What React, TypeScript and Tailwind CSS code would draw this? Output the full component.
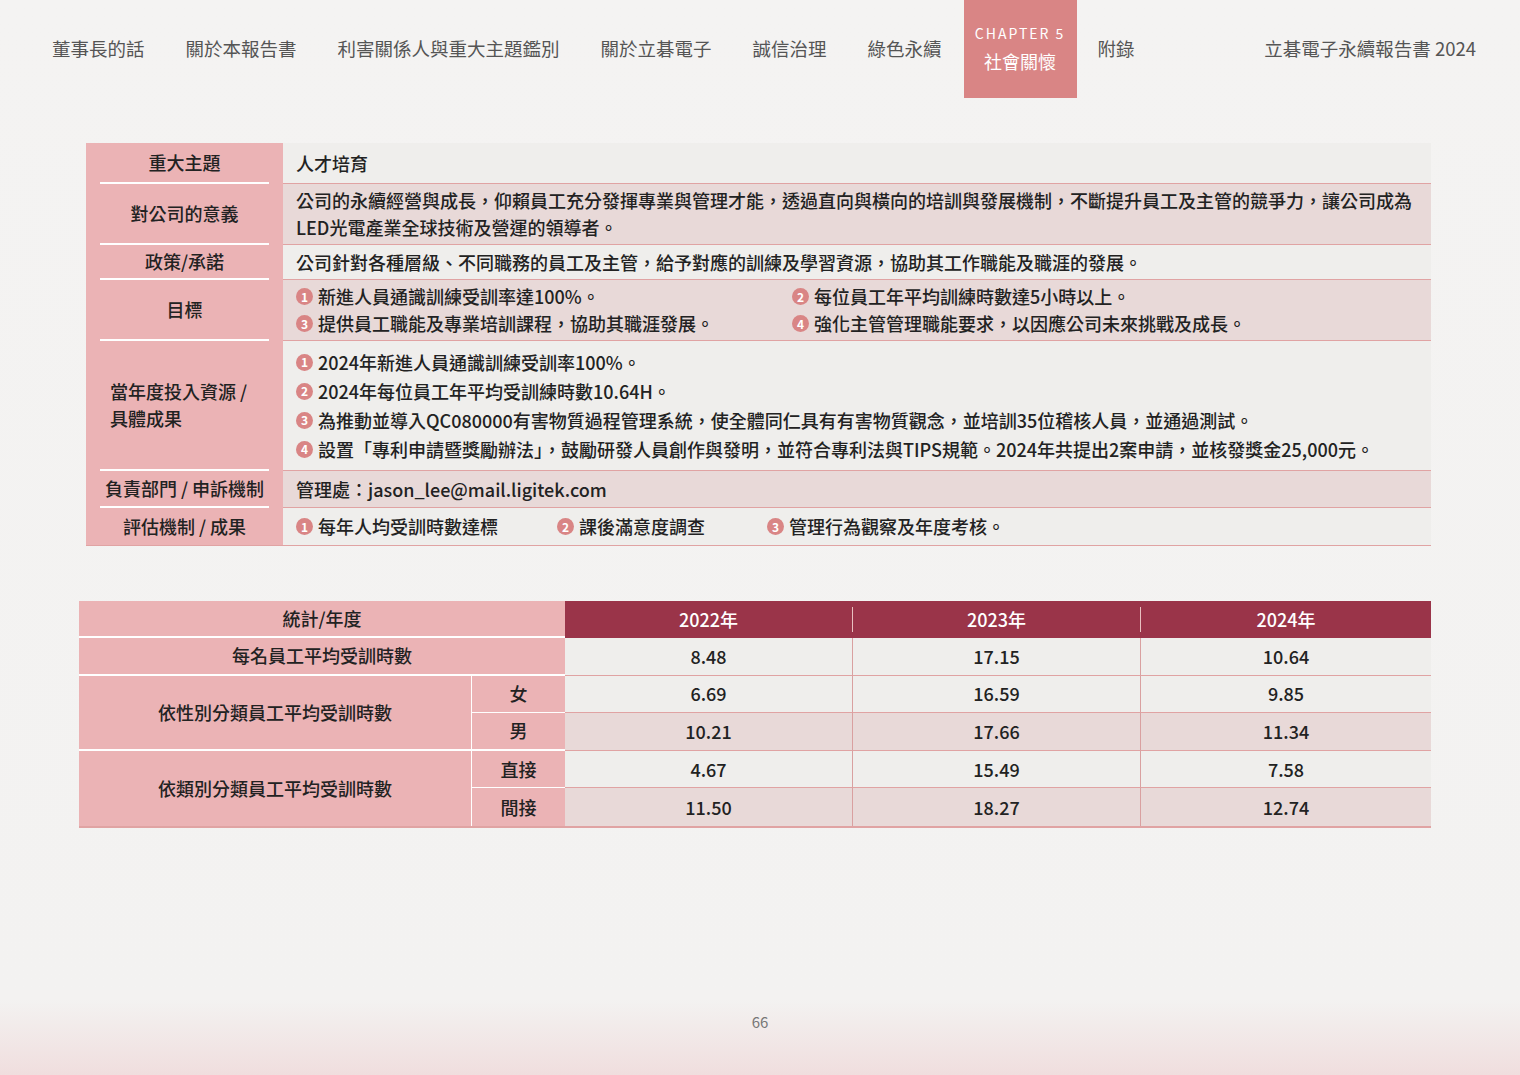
const font = { fontFamily: '"Noto Sans CJK TC", "Noto Sans", sans-serif' }

const nav = ['董事長的話', '關於本報告書', '利害關係人與重大主題鑑別', '關於立碁電子', '誠信治理', '綠色永續']

function Num({ n }: { n: number }) {
  return (
    <span className="mr-[5px] inline-flex h-[17px] w-[17px] shrink-0 items-center justify-center rounded-full bg-[#d98585] text-[12px] font-bold leading-none text-white">
      {n}
    </span>
  )
}

function Label({ children, h, last }: { children: React.ReactNode; h: string; last?: boolean }) {
  return (
    <div className={`${h} flex items-center justify-center bg-[#ebb3b5] px-[14px]`}>
      <div className={`flex h-full w-full items-center justify-center ${last ? '' : 'border-b-2 border-white'}`}>{children}</div>
    </div>
  )
}

const years = [
  ['8.48', '17.15', '10.64'],
  ['6.69', '16.59', '9.85'],
  ['10.21', '17.66', '11.34'],
  ['4.67', '15.49', '7.58'],
  ['11.50', '18.27', '12.74'],
]

export default function App() {
  const light = 'bg-[#efeeec]'
  const dark = 'bg-[#e8d9d8]'
  const cell = 'border-b border-[#e0a3a3] px-[13px] flex items-center'
  return (
    <div style={font} className="relative h-[1075px] w-[1520px] overflow-hidden bg-[linear-gradient(to_bottom,#f4f3f2_0%,#f3f2f1_93%,#f0dede_100%)] text-[18px] font-medium text-[#222]">
      <div className="flex h-[98px] items-start pl-[52px] pr-[44px] text-[18.5px] font-normal text-[#555]">
        <div className="flex h-[98px] items-center gap-[41px]">
          {nav.map((t) => (
            <span key={t}>{t}</span>
          ))}
        </div>
        <div className="ml-[22px] flex h-[98px] w-[113px] flex-col items-center justify-center bg-[#d98585] text-white">
          <span className="text-[14px] tracking-[2px]">CHAPTER 5</span>
          <span className="mt-[4px] text-[18px]">社會關懷</span>
        </div>
        <div className="ml-[21px] flex h-[98px] items-center">附錄</div>
        <div className="ml-auto flex h-[98px] items-center">立碁電子永續報告書 2024</div>
      </div>

      <div className="ml-[86px] mt-[45px] grid w-[1345px] grid-cols-[197px_1fr] leading-[27px]">
        <Label h="h-[41px]">重大主題</Label>
        <div className={`${cell} ${light}`}>人才培育</div>
        <Label h="h-[61px]">對公司的意義</Label>
        <div className={`${cell} ${dark}`}>公司的永續經營與成長，仰賴員工充分發揮專業與管理才能，透過直向與橫向的培訓與發展機制，不斷提升員工及主管的競爭力，讓公司成為LED光電產業全球技術及營運的領導者。</div>
        <Label h="h-[35px]">政策/承諾</Label>
        <div className={`${cell} ${light}`}>公司針對各種層級、不同職務的員工及主管，給予對應的訓練及學習資源，協助其工作職能及職涯的發展。</div>
        <Label h="h-[61px]">目標</Label>
        <div className={`${cell} ${dark} grid grid-cols-[496px_1fr] content-center`}>
          <span className="flex items-center"><Num n={1} />新進人員通識訓練受訓率達100%。</span>
          <span className="flex items-center"><Num n={2} />每位員工年平均訓練時數達5小時以上。</span>
          <span className="flex items-center"><Num n={3} />提供員工職能及專業培訓課程，協助其職涯發展。</span>
          <span className="flex items-center"><Num n={4} />強化主管管理職能要求，以因應公司未來挑戰及成長。</span>
        </div>
        <div className="flex h-[130px] items-center bg-[#ebb3b5] px-[14px]">
          <div className="flex h-full w-full items-center border-b-2 border-white pl-[10px]">當年度投入資源 /<br />具體成果</div>
        </div>
        <div className={`${cell} ${light} flex-col !items-start justify-center leading-[29px]`}>
          <span className="flex items-center"><Num n={1} />2024年新進人員通識訓練受訓率100%。</span>
          <span className="flex items-center"><Num n={2} />2024年每位員工年平均受訓練時數10.64H。</span>
          <span className="flex items-center"><Num n={3} />為推動並導入QC080000有害物質過程管理系統，使全體同仁具有有害物質觀念，並培訓35位稽核人員，並通過測試。</span>
          <span className="flex items-center"><Num n={4} />設置「專利申請暨獎勵辦法」，鼓勵研發人員創作與發明，並符合專利法與TIPS規範。2024年共提出2案申請，並核發獎金25,000元。</span>
        </div>
        <Label h="h-[37px]">負責部門 / 申訴機制</Label>
        <div className={`${cell} ${dark}`}>管理處：jason_lee@mail.ligitek.com</div>
        <div className="flex h-[38px] items-center justify-center border-b border-[#e0a3a3] bg-[#ebb3b5]">評估機制 / 成果</div>
        <div className={`${cell} ${light}`}>
          <span className="flex w-[261px] items-center"><Num n={1} />每年人均受訓時數達標</span>
          <span className="flex w-[210px] items-center"><Num n={2} />課後滿意度調查</span>
          <span className="flex items-center"><Num n={3} />管理行為觀察及年度考核。</span>
        </div>
      </div>

      <div className="ml-[79px] mt-[55px] grid w-[1352px] grid-cols-[393px_93px_288px_288px_290px] grid-rows-[37px_repeat(5,37.6px)] border-b-2 border-[#e0a3a3] text-center">
        <div className="col-span-2 flex items-center justify-center border-b-2 border-white bg-[#ebb3b5]">統計/年度</div>
        {['2022年', '2023年', '2024年'].map((y, i) => (
          <div key={y} className="flex items-center bg-[#9a3449] py-[6px] text-white">
            <div className={`flex h-full w-full items-center justify-center ${i < 2 ? 'border-r border-[#e8c0c0]' : ''}`}>{y}</div>
          </div>
        ))}
        <div className="col-span-2 flex items-center justify-center border-b-2 border-white bg-[#ebb3b5]">每名員工平均受訓時數</div>
        {years[0].map((v, i) => (
          <div key={i} className={`flex items-center justify-center border-b border-[#e0a3a3] ${light} ${i < 2 ? 'border-r border-r-[#d9a0a0]' : ''}`}>{v}</div>
        ))}
        <div className="row-span-2 flex items-center justify-center border-b-2 border-r border-white bg-[#ebb3b5]">依性別分類員工平均受訓時數</div>
        <div className="flex items-center justify-center border-b border-white bg-[#ebb3b5]">女</div>
        {years[1].map((v, i) => (
          <div key={i} className={`flex items-center justify-center border-b border-[#e0a3a3] ${light} ${i < 2 ? 'border-r border-r-[#d9a0a0]' : ''}`}>{v}</div>
        ))}
        <div className="flex items-center justify-center border-b-2 border-white bg-[#ebb3b5]">男</div>
        {years[2].map((v, i) => (
          <div key={i} className={`flex items-center justify-center border-b border-[#e0a3a3] ${dark} ${i < 2 ? 'border-r border-r-[#d9a0a0]' : ''}`}>{v}</div>
        ))}
        <div className="row-span-2 flex items-center justify-center border-r border-white bg-[#ebb3b5]">依類別分類員工平均受訓時數</div>
        <div className="flex items-center justify-center border-b border-white bg-[#ebb3b5]">直接</div>
        {years[3].map((v, i) => (
          <div key={i} className={`flex items-center justify-center border-b border-[#e0a3a3] ${light} ${i < 2 ? 'border-r border-r-[#d9a0a0]' : ''}`}>{v}</div>
        ))}
        <div className="flex items-center justify-center bg-[#ebb3b5]">間接</div>
        {years[4].map((v, i) => (
          <div key={i} className={`flex items-center justify-center ${dark} ${i < 2 ? 'border-r border-r-[#d9a0a0]' : ''}`}>{v}</div>
        ))}
      </div>

      <div className="absolute left-0 top-[1011px] w-full text-center text-[15px] font-normal text-[#777]">66</div>
    </div>
  )
}
